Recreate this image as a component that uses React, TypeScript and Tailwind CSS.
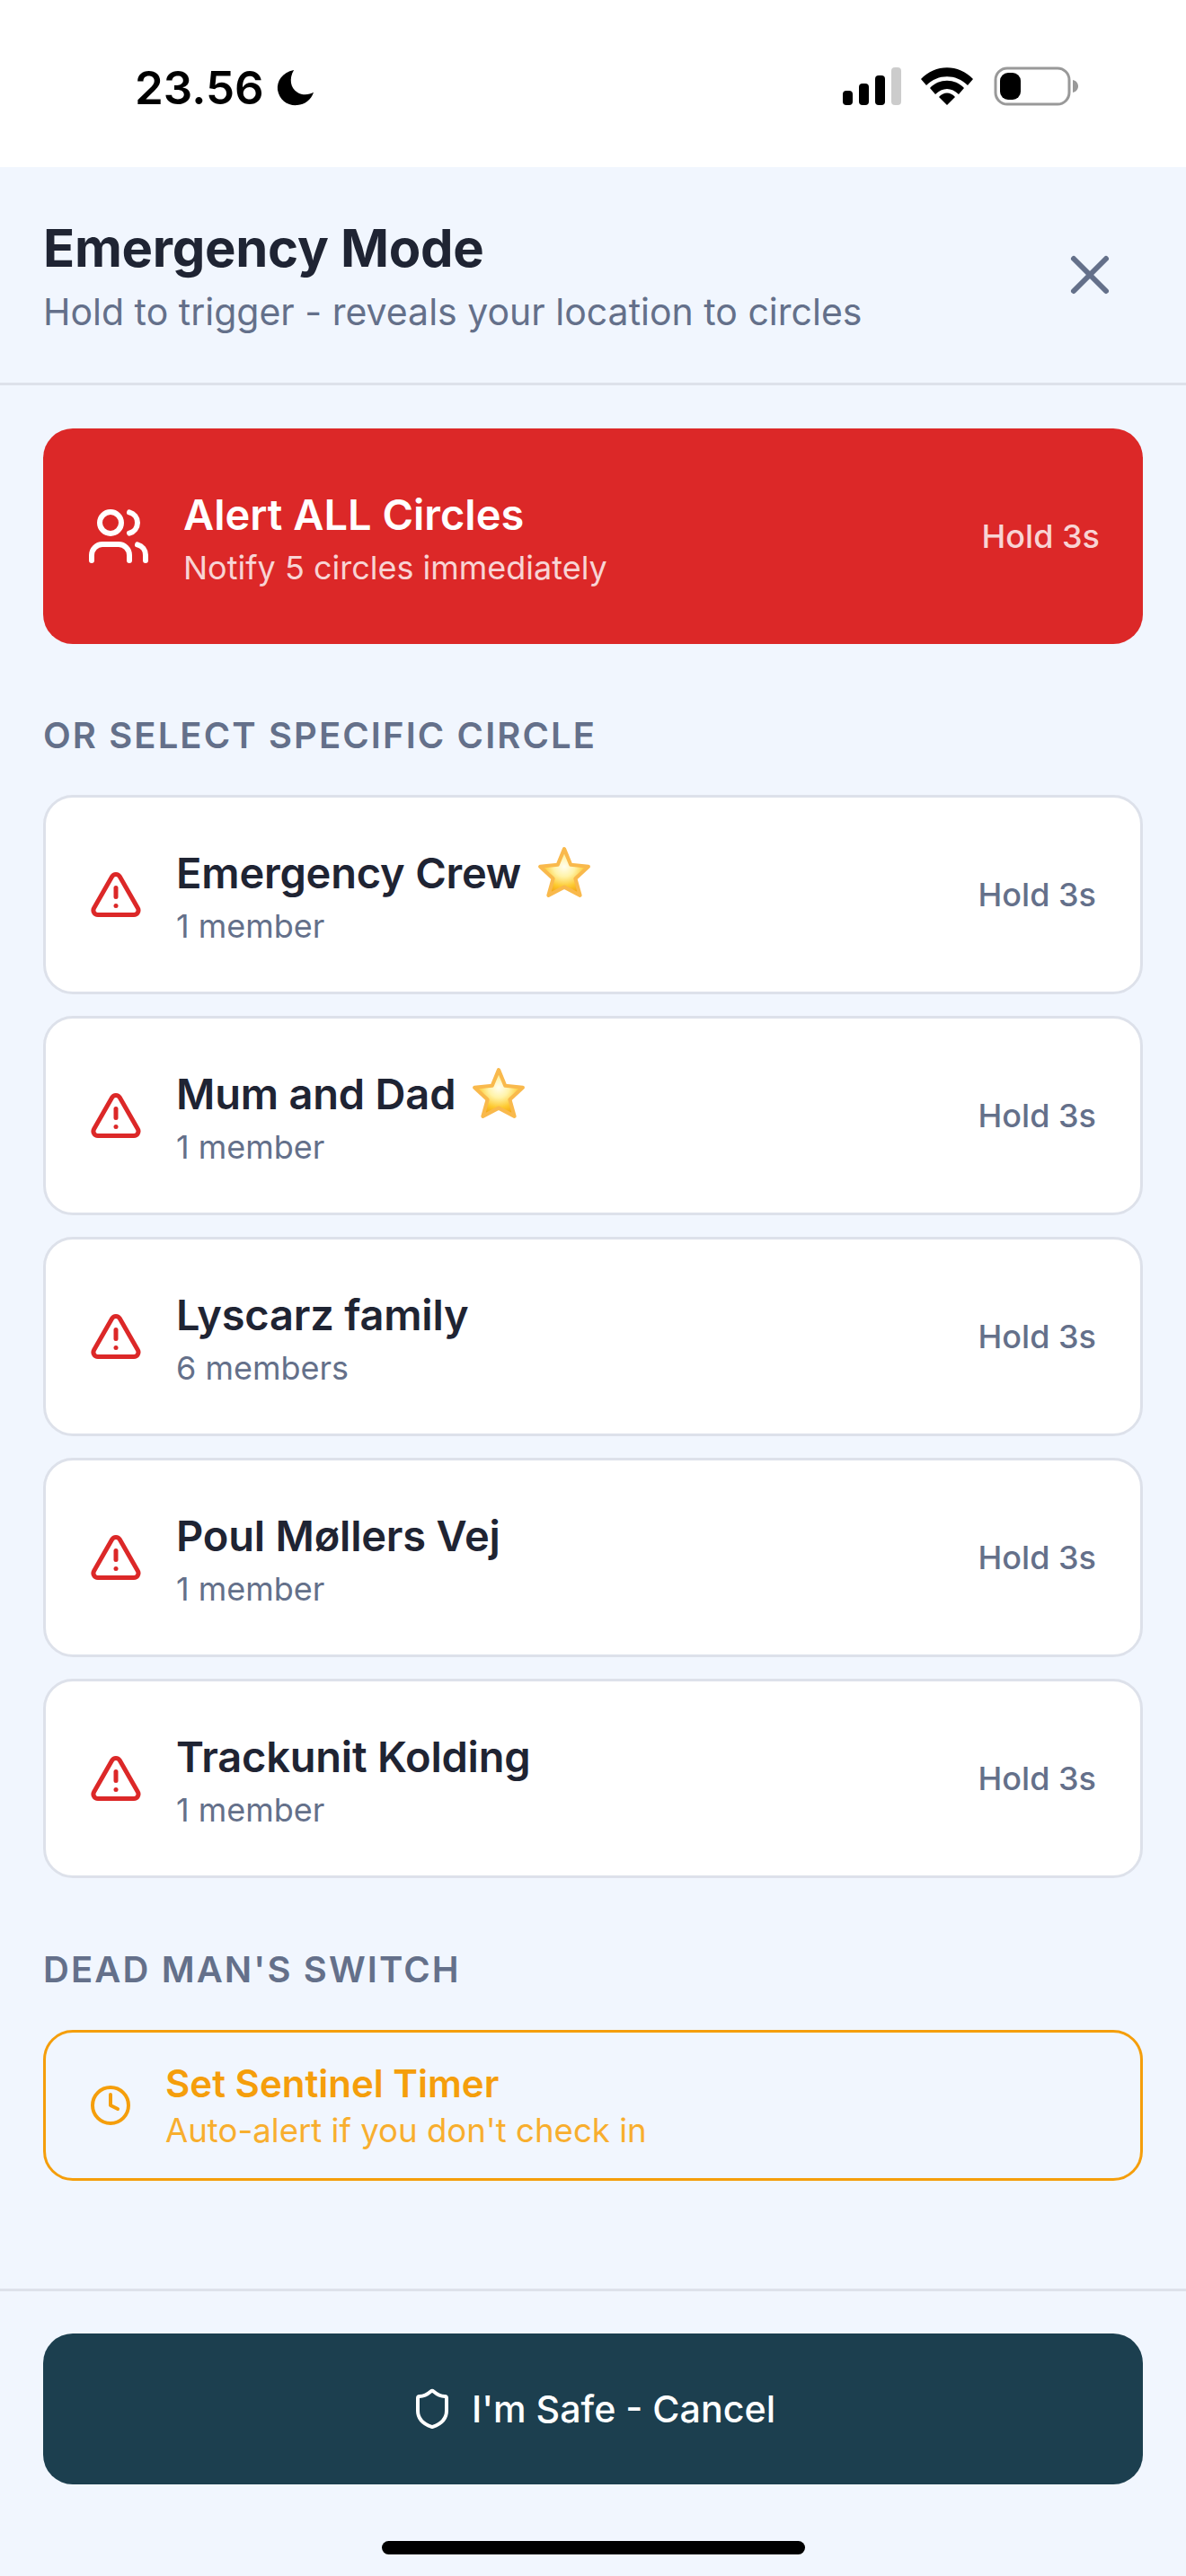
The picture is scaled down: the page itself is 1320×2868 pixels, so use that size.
import { AlertTriangle, Clock, Shield, Users, X } from 'lucide-react';

const circles = [
  { name: 'Emergency Crew', members: '1 member', star: true },
  { name: 'Mum and Dad', members: '1 member', star: true },
  { name: 'Lyscarz family', members: '6 members', star: false },
  { name: 'Poul Møllers Vej', members: '1 member', star: false },
  { name: 'Trackunit Kolding', members: '1 member', star: false },
];

function Star() {
  return (
    <svg viewBox="1 1 58 56" className="ml-[18px] -mt-[2px] h-[58px] w-[60px] shrink-0">
      <defs>
        <radialGradient id="star-fill" cx="0.5" cy="0.38" r="0.62">
          <stop offset="0" stopColor="#fffef0" />
          <stop offset="0.35" stopColor="#fff3a8" />
          <stop offset="0.7" stopColor="#fdc92f" />
          <stop offset="1" stopColor="#f2a00e" />
        </radialGradient>
      </defs>
      <path
        d="M30 4 L37 21 L56 23 L42 36 L47 54 L30 45 L13 54 L18 36 L4 23 L23 21 Z"
        fill="url(#star-fill)"
        stroke="#f9b94c"
        strokeWidth="4"
        strokeLinejoin="round"
      />
    </svg>
  );
}

function StatusBar() {
  return (
    <div className="flex h-[186px] items-start justify-between bg-white pl-[150px] pr-[120px] pt-[68px]">
      <div className="flex items-center gap-[14px]">
        <span className="text-[51px] leading-[60px] font-semibold text-black">23.56</span>
        <svg viewBox="0 0 44 44" className="h-[42px] w-[42px]">
          <path d="M20 1 C6 4 0 14 1 24 C3 36 13 43 24 42 C33 41 40 36 43 27 C38 30 30 31 24 27 C16 22 14 11 20 1 Z" fill="#000" />
        </svg>
      </div>
      <div className="mt-[6px] flex items-center gap-[24px]">
        <svg viewBox="0 0 66 42" className="h-[42px] w-[66px]">
          <rect x="0" y="26" width="11" height="16" rx="4" fill="#000" />
          <rect x="18" y="18" width="11" height="24" rx="4" fill="#000" />
          <rect x="36" y="9" width="11" height="33" rx="4" fill="#000" />
          <rect x="54" y="0" width="11" height="42" rx="4" fill="#ccc" />
        </svg>
        <svg viewBox="0 0 58 42" className="-ml-[3px] h-[42px] w-[58px]">
          <path d="M0 13 C16 -4 42 -4 58 13 L52 20 C39 7 19 7 6 20 Z" fill="#000" />
          <path d="M10 23 C20 12 38 12 48 23 L42 30 C34 22 24 22 16 30 Z" fill="#000" />
          <path d="M20 33 C25 27 33 27 38 33 L29 42 Z" fill="#000" />
        </svg>
        <svg viewBox="0 0 94 44" className="-ml-[1px] h-[44px] w-[94px]">
          <rect x="2" y="2" width="82" height="40" rx="13" fill="none" stroke="#999" strokeWidth="3" />
          <rect x="7" y="7" width="23" height="30" rx="9" fill="#000" />
          <path d="M88 15 C92 16 94 19 94 22 C94 25 92 28 88 29 Z" fill="#999" />
        </svg>
      </div>
    </div>
  );
}

function CircleCard({ name, members, star }: { name: string; members: string; star: boolean }) {
  return (
    <div className="flex h-[222px] items-center rounded-[33px] border-[3px] border-[#dde1ea] bg-white pl-[48px] pr-[49px]">
      <AlertTriangle className="h-[60px] w-[60px] shrink-0 text-[#dc2828]" strokeWidth={2} />
      <div className="ml-[37px] flex-1 pt-[4px]">
        <div className="flex h-[62px] items-center text-[47px] leading-[62px] font-semibold tracking-[-0.2px] text-[#1f2433]">
          {name}
          {star && <Star />}
        </div>
        <div className="mt-[3px] text-[36px] leading-[50px] text-[#64708a]">{members}</div>
      </div>
      <div className="text-[36px] leading-[48px] font-medium text-[#64708a]">Hold 3s</div>
    </div>
  );
}

function SectionLabel({ children }: { children: string }) {
  return <div className="text-[40px] leading-[56px] font-semibold tracking-[2.1px] text-[#64708a]">{children}</div>;
}

export default function App() {
  return (
    <div className="flex h-[2868px] w-[1320px] flex-col overflow-hidden bg-[#f1f6fe] font-['Inter',sans-serif]">
      <StatusBar />
      <div className="flex h-[243px] items-center justify-between border-b-[3px] border-[#dde1ea] pl-[48px] pr-[71px]">
        <div>
          <div className="text-[58px] leading-[76px] font-bold tracking-[-0.3px] text-[#1f2433]">Emergency Mode</div>
          <div className="mt-[5px] text-[41px] leading-[56px] text-[#64708a]">Hold to trigger - reveals your location to circles</div>
        </div>
        <X className="h-[72px] w-[72px] text-[#64708a]" strokeWidth={2} />
      </div>

      <div className="flex-1 px-[48px] pt-[48px]">
        <div className="flex h-[240px] items-center rounded-[33px] bg-[#dc2828] pl-[48px] pr-[48px] text-white">
          <Users className="h-[72px] w-[72px] shrink-0" strokeWidth={2} />
          <div className="ml-[36px] flex-1 pt-[4px]">
            <div className="text-[47px] leading-[62px] font-semibold">Alert ALL Circles</div>
            <div className="mt-[3px] text-[36px] leading-[50px] text-[#f8d4d4]">Notify 5 circles immediately</div>
          </div>
          <div className="text-[36px] leading-[48px] font-medium text-[#f8d4d4]">Hold 3s</div>
        </div>

        <div className="mt-[74px]">
          <SectionLabel>OR SELECT SPECIFIC CIRCLE</SectionLabel>
        </div>
        <div className="mt-[38px] flex flex-col gap-[24px]">
          {circles.map(c => (
            <CircleCard key={c.name} {...c} />
          ))}
        </div>

        <div className="mt-[74px]">
          <SectionLabel>DEAD MAN'S SWITCH</SectionLabel>
        </div>
        <div className="mt-[39px] flex h-[168px] items-center rounded-[33px] border-[3px] border-[#f59e0b] pl-[48px] text-[#f59e0b]">
          <Clock className="h-[48px] w-[48px] shrink-0" strokeWidth={2} />
          <div className="ml-[37px]">
            <div className="text-[42px] leading-[56px] font-semibold">Set Sentinel Timer</div>
            <div className="text-[36.6px] leading-[48px] text-[#f8ae2e]">Auto-alert if you don't check in</div>
          </div>
        </div>
      </div>

      <div className="h-[320px] border-t-[3px] border-[#dde1ea] px-[48px] pt-[47px]">
        <div className="flex h-[168px] items-center justify-center gap-[20px] rounded-[33px] bg-[#1c3f4f] text-white">
          <Shield className="h-[48px] w-[48px]" strokeWidth={2} />
          <span className="text-[41.2px] leading-[56px] font-medium">I'm Safe - Cancel</span>
        </div>
        <div className="mx-auto mt-[63px] h-[15px] w-[471px] rounded-full bg-black" />
      </div>
    </div>
  );
}
